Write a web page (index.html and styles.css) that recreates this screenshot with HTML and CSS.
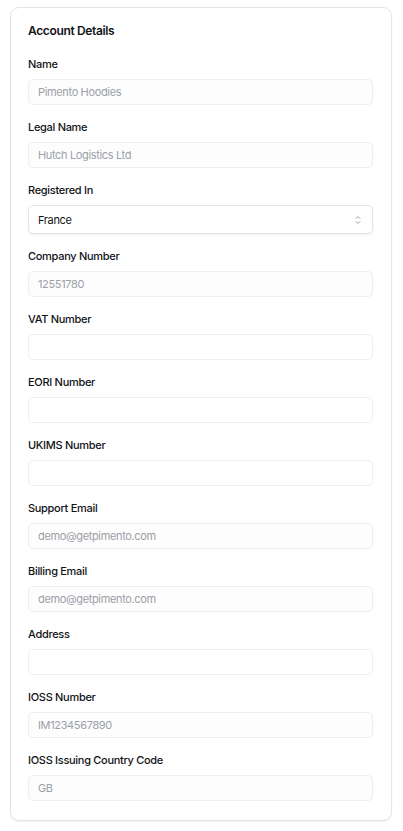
FILE: index.html
```html
<!DOCTYPE html>
<html lang="en">
<head>
<meta charset="utf-8">
<title>Account Details</title>
<link rel="stylesheet" href="styles.css">
</head>
<body>
<section class="card">
  <h2 class="title">Account Details</h2>
  <div class="fields">
    <div class="field">
      <div class="label">Name</div>
      <div class="input muted">Pimento Hoodies</div>
    </div>
    <div class="field">
      <div class="label">Legal Name</div>
      <div class="input muted">Hutch Logistics Ltd</div>
    </div>
    <div class="field">
      <div class="label">Registered In</div>
      <div class="select">
        <span>France</span>
        <svg class="chev" width="8" height="10" viewBox="0 0 8 10" fill="none" stroke="#9aa1ab" stroke-width="1" stroke-linecap="round" stroke-linejoin="round"><path d="M2 3.5 4 1.5 6 3.5"/><path d="M2 6.5 4 8.5 6 6.5"/></svg>
      </div>
    </div>
    <div class="field">
      <div class="label">Company Number</div>
      <div class="input muted">12551780</div>
    </div>
    <div class="field">
      <div class="label">VAT Number</div>
      <div class="input empty"></div>
    </div>
    <div class="field">
      <div class="label">EORI Number</div>
      <div class="input empty"></div>
    </div>
    <div class="field">
      <div class="label">UKIMS Number</div>
      <div class="input empty"></div>
    </div>
    <div class="field">
      <div class="label">Support Email</div>
      <div class="input muted">demo@getpimento.com</div>
    </div>
    <div class="field">
      <div class="label">Billing Email</div>
      <div class="input muted">demo@getpimento.com</div>
    </div>
    <div class="field">
      <div class="label">Address</div>
      <div class="input empty"></div>
    </div>
    <div class="field">
      <div class="label">IOSS Number</div>
      <div class="input muted">IM1234567890</div>
    </div>
    <div class="field">
      <div class="label">IOSS Issuing Country Code</div>
      <div class="input muted">GB</div>
    </div>
  </div>
</section>
</body>
</html>
```
FILE: styles.css
```css
* { box-sizing: border-box; }
html, body { margin: 0; padding: 0; background: #ffffff; }
body {
  font-family: Inter, "Noto Sans", "Liberation Sans", sans-serif;
  color: #111318;
  padding: 7px 11px 10px 10px;
}
.card {
  border: 1px solid #e1e5eb;
  border-radius: 9px;
  background: #ffffff;
  box-shadow: 0 1px 2px rgba(16, 24, 40, 0.06);
  padding: 14px 18px 19px 17px;
}
.title {
  margin: 0 0 16px 0;
  font-size: 12px;
  line-height: 18px;
  font-weight: 600;
  letter-spacing: -0.35px;
}
.fields {
  display: flex;
  flex-direction: column;
  gap: 14px;
}
.field {
  display: flex;
  flex-direction: column;
  gap: 7px;
}
.label {
  font-size: 11px;
  line-height: 16px;
  font-weight: 500;
  letter-spacing: -0.3px;
  color: #111318;
}
.input {
  height: 26px;
  border: 1px solid #eceef1;
  border-radius: 5px;
  padding: 0 9px;
  font-size: 11px;
  line-height: 24px;
  letter-spacing: -0.35px;
  background: #fdfdfd;
}
.input.muted { color: #9ca0a8; }
.input.empty { background: #ffffff; }
.select {
  height: 29px;
  border: 1px solid #e1e5eb;
  border-radius: 5px;
  padding: 0 10px 0 9px;
  font-size: 11px;
  letter-spacing: -0.35px;
  background: #ffffff;
  box-shadow: 0 1px 2px rgba(16, 24, 40, 0.08);
  display: flex;
  align-items: center;
  justify-content: space-between;
  color: #111318;
}
.chev { display: block; }
```
